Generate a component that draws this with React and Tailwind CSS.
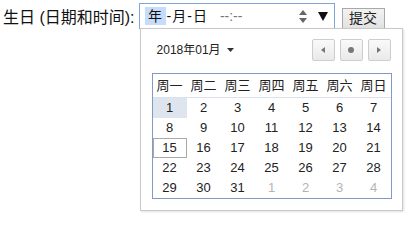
import React from 'react'

const FONT = "font-['Liberation_Sans','Noto_Sans_CJK_SC',sans-serif]"

const weekdays = ['周一', '周二', '周三', '周四', '周五', '周六', '周日']

// January 2018 starts on Monday, so the grid is simple
const days = [
  ...Array.from({ length: 31 }, (_, i) => ({ n: i + 1, muted: false })),
  ...[1, 2, 3, 4].map((n) => ({ n, muted: true })),
]

const NavButton = ({ children }) => (
  <div className="w-[23px] h-[22px] flex items-center justify-center rounded-[2px] border border-[#cdcdcd] bg-gradient-to-b from-[#fafafa] to-[#e9e9e9]">
    {children}
  </div>
)

const Calendar = () => (
  <div className="absolute left-[1px] top-[25px] w-[263px] h-[183px] border border-[#c9c9c9] bg-white shadow-[1px_1px_2px_rgba(0,0,0,0.12)] px-[11px] pt-[10px] pb-[11px]">
    <div className="flex items-center h-[22px]">
      <div className="flex items-center pl-[5px] text-[12px] text-[#222]">
        <span>2018年01月</span>
        <svg width="7" height="4" viewBox="0 0 7 4" className="ml-[6px]">
          <path d="M0 0h7L3.5 4z" fill="#333" />
        </svg>
      </div>
      <div className="ml-auto flex gap-[5px]">
        <NavButton>
          <svg width="4" height="6" viewBox="0 0 4 6">
            <path d="M4 0v6L0 3z" fill="#777" />
          </svg>
        </NavButton>
        <NavButton>
          <div className="w-[6px] h-[6px] rounded-full bg-[#777]" />
        </NavButton>
        <NavButton>
          <svg width="4" height="6" viewBox="0 0 4 6">
            <path d="M0 0v6l4-3z" fill="#777" />
          </svg>
        </NavButton>
      </div>
    </div>

    <div className="mt-[12px] w-[240px] border border-[#7f9bc8]">
      <div className="grid grid-cols-7 h-[24px] border-b border-[#dbe1ea] items-center text-[13px] text-[#222]">
        {weekdays.map((w) => (
          <div key={w} className="text-center">{w}</div>
        ))}
      </div>
      <div className="grid grid-cols-7">
        {days.map((d, i) => (
          <div
            key={i}
            className={`h-[20px] flex items-center justify-center text-[13px] ${
              d.muted ? 'text-[#b4b4b4]' : 'text-[#222]'
            } ${i === 0 ? 'bg-[#dfe5ee]' : ''} ${i === 14 ? 'border border-[#a9a9a9]' : ''}`}
          >
            {d.n}
          </div>
        ))}
      </div>
    </div>
  </div>
)

export default function App() {
  return (
    <div className={`relative w-[409px] h-[218px] bg-white text-[#111] ${FONT}`}>
      <div className="flex items-start pl-[3px] pt-[3px]">
        <label className="h-[26px] leading-[26px] mt-[2px] text-[16px] mr-[4px] whitespace-nowrap">
          生日 (日期和时间):
        </label>

        <div className="relative">
          <div className="w-[196px] h-[26px] border border-[#7fa6d6] flex items-center pl-[5px] text-[14px]">
            <span className="w-[21px] h-[18px] leading-[18px] text-center bg-[#c7dcf8]">年</span>
            <span className="ml-[1px]">-</span>
            <span className="ml-[1px]">月</span>
            <span className="ml-[1px]">-</span>
            <span className="ml-[1px]">日</span>
            <span className="ml-[13px] text-[#777]">--:--</span>
            <svg width="8" height="13" viewBox="0 0 8 13" className="ml-auto">
              <path d="M4 0l4 5H0z" fill="#666" />
              <path d="M4 13l4-5H0z" fill="#666" />
            </svg>
            <svg width="10" height="9" viewBox="0 0 10 9" className="ml-[11px] mr-[6px]">
              <path d="M0 0h10L5 9z" fill="#111" />
            </svg>
          </div>
          <Calendar />
        </div>

        <button className="ml-[7px] mt-[5px] w-[43px] h-[21px] border border-[#a9a9a9] bg-gradient-to-b from-[#f2f2f2] to-[#e2e2e2] text-[14px] leading-[19px] text-[#222]">
          提交
        </button>
      </div>
    </div>
  )
}
